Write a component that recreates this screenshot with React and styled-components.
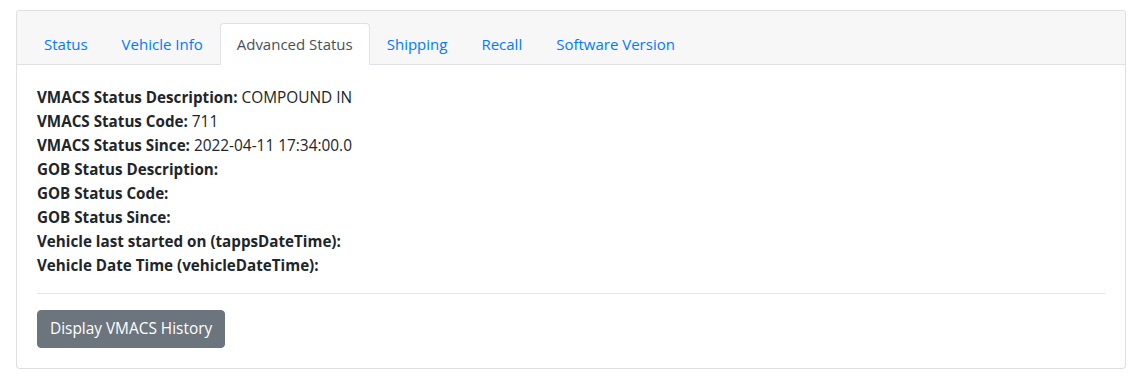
import styled, { createGlobalStyle } from "styled-components";

const GlobalStyle = createGlobalStyle`
    body {
        margin: 0;
        background: #fff;
        font-family: 'Open Sans', 'Noto Sans', sans-serif;
        font-size: 15px;
        line-height: 24px;
        color: #212529;
    }
    * {
        box-sizing: border-box;
    }
`;

const Page = styled.div`
    padding: 10px 12px 0 16px;
`;

const Card = styled.div`
    border: 1px solid rgba(0, 0, 0, 0.125);
    border-radius: 4px;
    background: #fff;
`;

const CardHeader = styled.div`
    background: #f7f7f7;
    border-bottom: 1px solid #dee2e6;
    padding: 12px 10px 0;
    border-radius: 3px 3px 0 0;
`;

const Tabs = styled.ul`
    display: flex;
    list-style: none;
    margin: 0 0 -1px;
    padding: 0;
`;

const Tab = styled.li`
    padding: 8px 16px;
    border: 1px solid ${(p) => (p.$active ? "#dee2e6" : "transparent")};
    border-bottom-color: ${(p) => (p.$active ? "#fff" : "transparent")};
    border-radius: 4px 4px 0 0;
    background: ${(p) => (p.$active ? "#fff" : "transparent")};
    color: ${(p) => (p.$active ? "#495057" : "#007bff")};
    cursor: pointer;
`;

const CardBody = styled.div`
    padding: 20px;
    font-size: 15.2px;
`;

const Line = styled.div`
    height: 24px;
    white-space: nowrap;
`;

const Label = styled.b`
    font-weight: 700;
`;

const Value = styled.span`
    font-size: 15.4px;
    line-height: 1;
`;

const Divider = styled.hr`
    margin: 16px 0;
    border: 0;
    border-top: 1px solid rgba(0, 0, 0, 0.1);
`;

const Button = styled.button`
    font-family: inherit;
    font-size: 15.4px;
    line-height: 24px;
    color: #fff;
    background: #6c757d;
    border: 1px solid #6c757d;
    border-radius: 4px;
    padding: 6px 12px;
    cursor: pointer;
`;

const tabs = ["Status", "Vehicle Info", "Advanced Status", "Shipping", "Recall", "Software Version"];

const rows = [
    ["VMACS Status Description:", "COMPOUND IN"],
    ["VMACS Status Code:", "711"],
    ["VMACS Status Since:", "2022-04-11 17:34:00.0"],
    ["GOB Status Description:", ""],
    ["GOB Status Code:", ""],
    ["GOB Status Since:", ""],
    ["Vehicle last started on (tappsDateTime):", ""],
    ["Vehicle Date Time (vehicleDateTime):", ""],
];

const App = () => (
    <>
        <GlobalStyle />
        <Page>
            <Card>
                <CardHeader>
                    <Tabs>
                        {tabs.map((t) => (
                            <Tab key={t} $active={t === "Advanced Status"}>{t}</Tab>
                        ))}
                    </Tabs>
                </CardHeader>
                <CardBody>
                    {rows.map(([label, value]) => (
                        <Line key={label}>
                            <Label>{label}</Label> <Value>{value}</Value>
                        </Line>
                    ))}
                    <Divider />
                    <Button>Display VMACS History</Button>
                </CardBody>
            </Card>
        </Page>
    </>
);

export default App;
